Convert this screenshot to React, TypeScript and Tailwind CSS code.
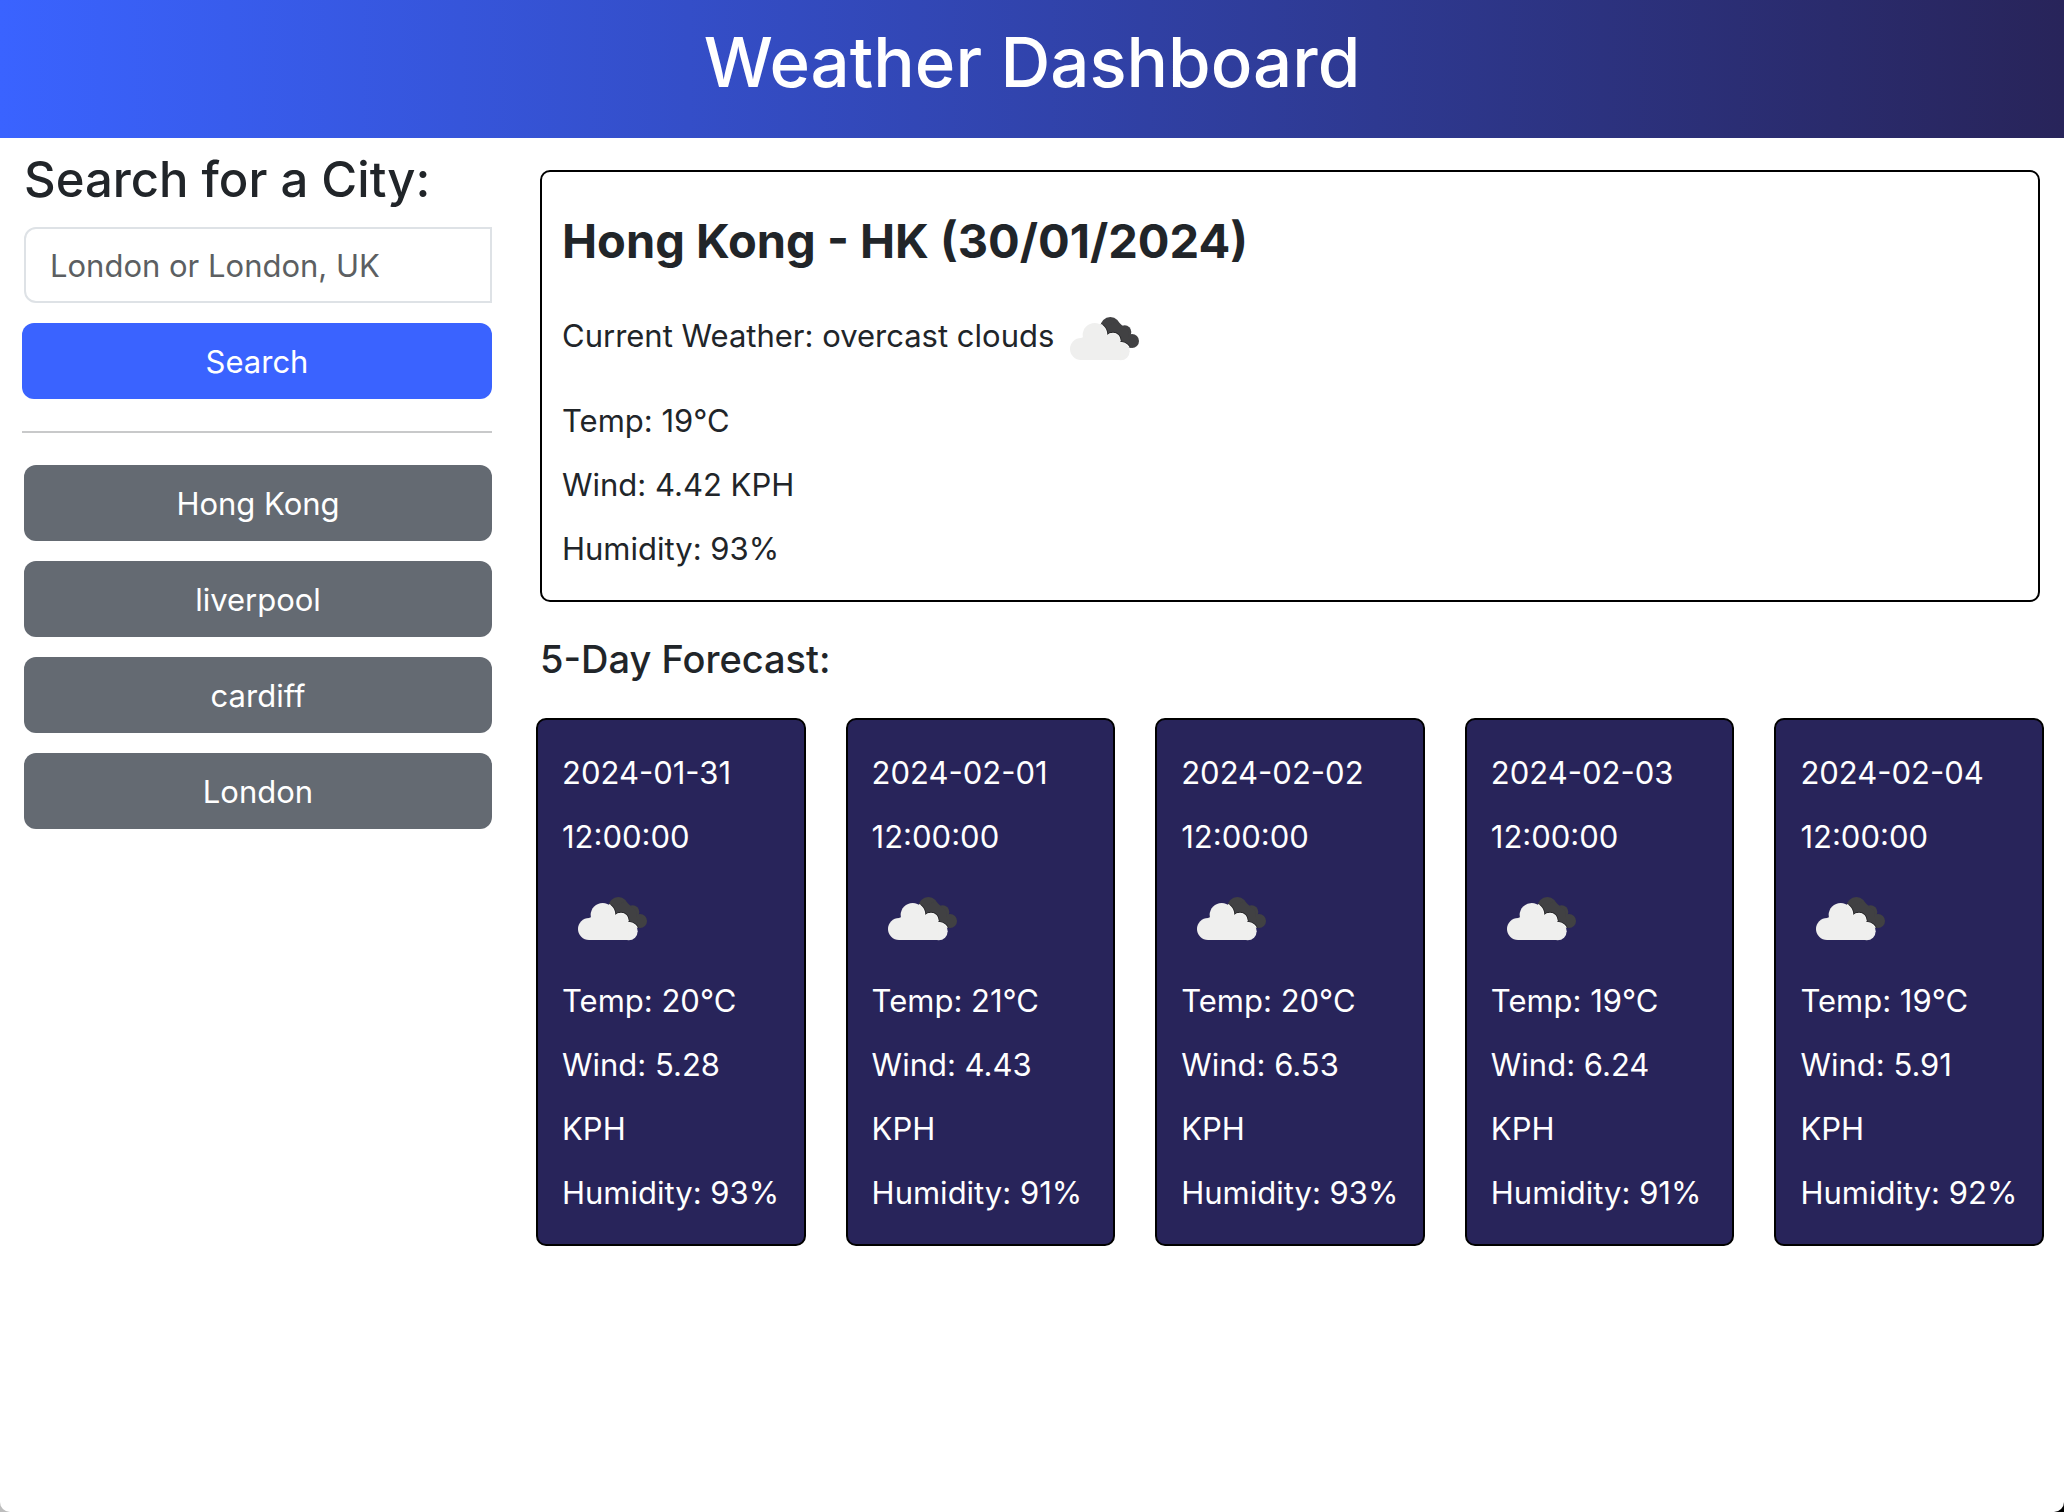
import React, { useId } from "react";

const cities = ["Hong Kong", "liverpool", "cardiff", "London"];

const forecast = [
  { date: "2024-01-31", temp: 20, wind: "5.28", humidity: 93 },
  { date: "2024-02-01", temp: 21, wind: "4.43", humidity: 91 },
  { date: "2024-02-02", temp: 20, wind: "6.53", humidity: 93 },
  { date: "2024-02-03", temp: 19, wind: "6.24", humidity: 91 },
  { date: "2024-02-04", temp: 19, wind: "5.91", humidity: 92 },
];

function DarkCloud() {
  return (
    <>
      <circle cx="169" cy="114" r="30" />
      <circle cx="212" cy="129" r="20" />
      <circle cx="234" cy="156" r="21" />
      <path d="M145 120 L190 96 L222 125 L228 176 L180 176 Z" />
    </>
  );
}

function LightCloud() {
  return (
    <>
      <circle cx="81" cy="180" r="33" />
      <circle cx="122" cy="138" r="36" />
      <circle cx="175" cy="155" r="23" />
      <circle cx="200" cy="187" r="27" />
      <path d="M81 147 L122 130 L158 140 L175 140 L200 163 V213 H81 Z" />
    </>
  );
}

function OvercastIcon({ className }: { className?: string }) {
  const clip = useId();
  return (
    <svg
      viewBox="0 0 300 300"
      role="img"
      aria-label="overcast clouds"
      className={className}
    >
      <clipPath id={clip}>
        <DarkCloud />
      </clipPath>
      <g fill="#414143">
        <DarkCloud />
      </g>
      <g clipPath={`url(#${clip})`}>
        <g fill="#29292b" stroke="#29292b" strokeWidth="5" transform="translate(2 -1)">
          <LightCloud />
        </g>
        <g fill="#ffffff" transform="translate(2 -1)">
          <LightCloud />
        </g>
      </g>
      <g fill="#efefee">
        <LightCloud />
      </g>
    </svg>
  );
}

export default function App() {
  return (
    <div className="min-h-screen bg-linear-to-r from-[#bdbdbd] to-black font-['Inter',sans-serif] text-[31px] text-[#212529]">
      <div className="min-h-screen overflow-hidden rounded-b-[10px] bg-white">
        <header className="bg-linear-to-r/srgb from-[#3a63ff] to-[#28245a] pt-[17px] pb-[31px] text-center text-white">
          <h1 className="text-[69px] leading-[90px] font-medium">Weather Dashboard</h1>
        </header>
        <div className="flex">
          <aside className="w-1/4 pr-6 pl-[22px]">
            <form onSubmit={(e) => e.preventDefault()}>
              <label
                htmlFor="city"
                className="block pt-[9px] pb-[15px] pl-0.5 text-[49px] leading-[65px] font-medium whitespace-nowrap"
              >
                Search for a City:
              </label>
              <div className="pl-0.5">
                <input
                  id="city"
                  type="text"
                  placeholder="London or London, UK"
                  className="block h-[76px] w-full rounded-l-xl border-2 border-[#dee2e6] bg-white px-6 placeholder:text-[#5c5f62]"
                />
              </div>
              <button
                type="submit"
                className="mt-5 block h-[76px] w-full rounded-xl bg-[#3a63ff] pt-0.5 text-white"
              >
                Search
              </button>
            </form>
            <hr className="my-8 border-t-2 border-[#c8c9ca]" />
            <div className="flex flex-col gap-5 pl-0.5">
              {cities.map((city) => (
                <button
                  key={city}
                  type="button"
                  className="h-[76px] w-full rounded-xl bg-[#646a72] pt-0.5 text-white"
                >
                  {city}
                </button>
              ))}
            </div>
          </aside>
          <main className="w-3/4 px-6 pt-8">
            <section className="rounded-[10px] border-2 border-black px-5 pt-[21px] pb-[19px] leading-[64px]">
              <h2 className="text-[47px] leading-[96px] font-bold">
                Hong Kong - HK (30/01/2024)
              </h2>
              <p>
                Current Weather: overcast clouds
                <OvercastIcon className="inline-block size-[100px] align-middle" />
              </p>
              <p>Temp: 19°C</p>
              <p>Wind: 4.42 KPH</p>
              <p>Humidity: 93%</p>
            </section>
            <h3 className="pt-[33px] pb-[35px] text-[38px] leading-[48px] font-medium">5-Day Forecast:</h3>
            <section className="-mx-1 grid grid-cols-5 gap-10">
              {forecast.map((day) => (
                <article
                  key={day.date}
                  className="rounded-[10px] border-2 border-black bg-[#28245a] pt-[21px] pr-5 pb-[19px] pl-6 leading-[64px] text-white"
                >
                  <p>{day.date} 12:00:00</p>
                  <OvercastIcon className="block size-[100px]" />
                  <p>Temp: {day.temp}°C</p>
                  <p>
                    Wind: {day.wind}
                    <br />
                    KPH
                  </p>
                  <p className="whitespace-nowrap">Humidity: {day.humidity}%</p>
                </article>
              ))}
            </section>
          </main>
        </div>
      </div>
    </div>
  );
}
